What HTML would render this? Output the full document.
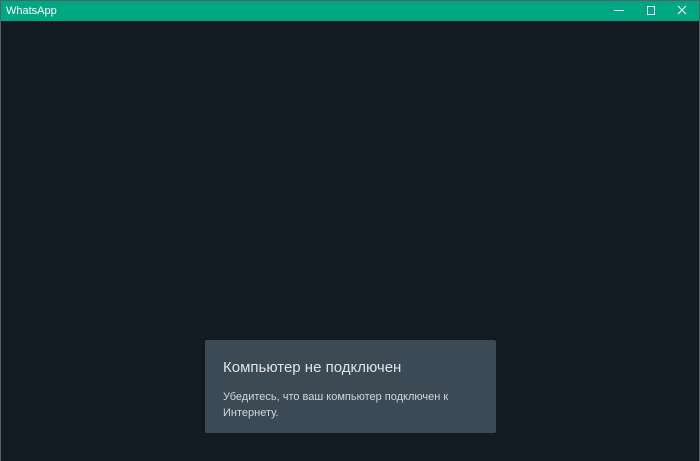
<!DOCTYPE html>
<html><head><meta charset="utf-8"><style>
html,body{margin:0;padding:0;width:700px;height:461px;overflow:hidden;background:#111b21;font-family:"Liberation Sans","DejaVu Sans",sans-serif}
.frame{position:absolute;left:0;top:0;width:700px;height:461px;box-sizing:border-box;border-left:1px solid #5a5f62;border-right:1px solid #5a5f62;border-top:1px solid #5a5f62}
.bar{position:absolute;left:0;top:0;width:700px;height:21px;background:#00a783}
.title{position:absolute;left:6px;top:5px;font-size:11px;color:#fff}
.card{position:absolute;left:205px;top:340px;width:291px;height:93px;background:#3b4a54;border-radius:2px}
.h{position:absolute;left:18px;top:19px;font-size:15px;color:#dfe3e6}
.p{position:absolute;left:18px;top:49px;font-size:11px;line-height:16px;color:#d1d7db;width:230px}
</style></head><body>
<div class="bar"><span class="title">WhatsApp</span>
<svg style="position:absolute;left:0;top:0" width="700" height="21">
<line x1="614" y1="10.5" x2="624" y2="10.5" stroke="#fff" stroke-width="1"/>
<rect x="647.5" y="6.5" width="7" height="8" fill="none" stroke="#fff" stroke-width="1"/>
<path d="M678 6 L686 14 M686 6 L678 14" stroke="#fff" stroke-width="1"/>
</svg></div>
<div class="frame"></div>
<div class="card">
<div class="h">Компьютер не подключен</div>
<div class="p">Убедитесь, что ваш компьютер подключен к Интернету.</div>
</div>
</body></html>
